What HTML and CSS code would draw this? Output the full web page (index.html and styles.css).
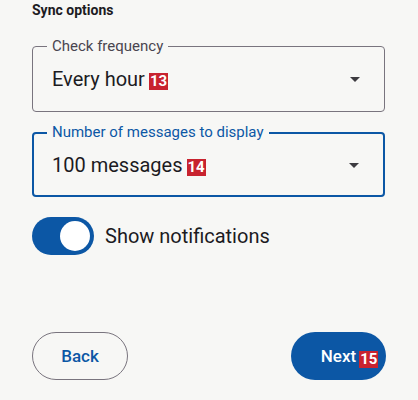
FILE: index.html
```html
<!DOCTYPE html>
<html>
<head>
	<title>Sync options</title>
	<meta charset="utf-8">
	<link rel="stylesheet" href="styles.css">
</head>

<body>

<main class="page">
	<h2 class="section-title">Sync options</h2>

	<div class="select">
		<span class="select-label">Check frequency</span>
		<span class="select-value">Every hour<span class="tag">13</span></span>
		<svg class="caret" viewBox="0 0 24 24" width="24" height="24"><path d="M7 10l5 5 5-5z"/></svg>
	</div>

	<div class="select select-focused">
		<span class="select-label">Number of messages to display</span>
		<span class="select-value">100 messages<span class="tag">14</span></span>
		<svg class="caret" viewBox="0 0 24 24" width="24" height="24"><path d="M7 10l5 5 5-5z"/></svg>
	</div>

	<label class="switch-row">
		<span class="switch"><span class="switch-thumb"></span></span>
		<span class="switch-text">Show notifications</span>
	</label>

	<div class="actions">
		<button class="btn btn-outline">Back</button>
		<button class="btn btn-filled"><span class="btn-text">Next<span class="tag tag-float">15</span></span></button>
	</div>
</main>

</body>
</html>
```

FILE: styles.css
```css
body {
	margin: 0;
	background: #f7f7f5;
	color: #1c1b1f;
	font-family: Roboto, "Liberation Sans", sans-serif;
}
.page {
	padding: 2px 33px 0 32px;
}
.section-title {
	margin: 0 0 27px;
	font-size: 14px;
	line-height: 17px;
	font-weight: 700;
}
.select {
	position: relative;
	display: flex;
	align-items: center;
	box-sizing: border-box;
	height: 66px;
	padding: 0 17px 0 19px;
	border: 1px solid #79747e;
	border-radius: 4px;
	margin-bottom: 20px;
}
.select-label {
	position: absolute;
	top: -10px;
	left: 14px;
	padding: 0 5px;
	background: #f7f7f5;
	color: #49454f;
	font-size: 15px;
	line-height: 18px;
}
.select-value {
	flex: 1;
	font-size: 20px;
	line-height: 24px;
}
.caret {
	fill: #3d3b40;
}
.select-focused {
	height: 65px;
	padding-left: 18px;
	border: 2px solid #0c57a5;
}
.select-focused .select-label {
	top: -11px;
	left: 13px;
	color: #0c57a5;
}
.tag {
	display: inline-block;
	margin-left: 4px;
	padding: 0 1px;
	background: #c8232f;
	color: #fff;
	font-size: 15px;
	line-height: 17px;
	font-weight: 700;
}
.switch-row {
	display: flex;
	align-items: center;
	gap: 11px;
}
.switch {
	display: flex;
	align-items: center;
	justify-content: flex-end;
	box-sizing: border-box;
	width: 62px;
	height: 38px;
	padding: 0 4px;
	border-radius: 19px;
	background: #0c57a5;
}
.switch-thumb {
	width: 30px;
	height: 30px;
	border-radius: 50%;
	background: #fff;
}
.switch-text {
	font-size: 20px;
	line-height: 24px;
}
.actions {
	display: flex;
	justify-content: space-between;
	margin: 77px 0 0;
}
.btn {
	box-sizing: border-box;
	height: 48px;
	border-radius: 24px;
	font-family: inherit;
	font-size: 17px;
	font-weight: 500;
	padding: 0;
}
.btn-outline {
	width: 96px;
	background: transparent;
	border: 1px solid #79747e;
	color: #0c57a5;
}
.btn-filled {
	width: 95px;
	margin-right: -1px;
	background: #0c57a5;
	border: 0;
	color: #fff;
}
.btn-text {
	position: relative;
}
.tag-float {
	position: absolute;
	left: 100%;
	bottom: -2px;
	margin-left: 3px;
}
```
